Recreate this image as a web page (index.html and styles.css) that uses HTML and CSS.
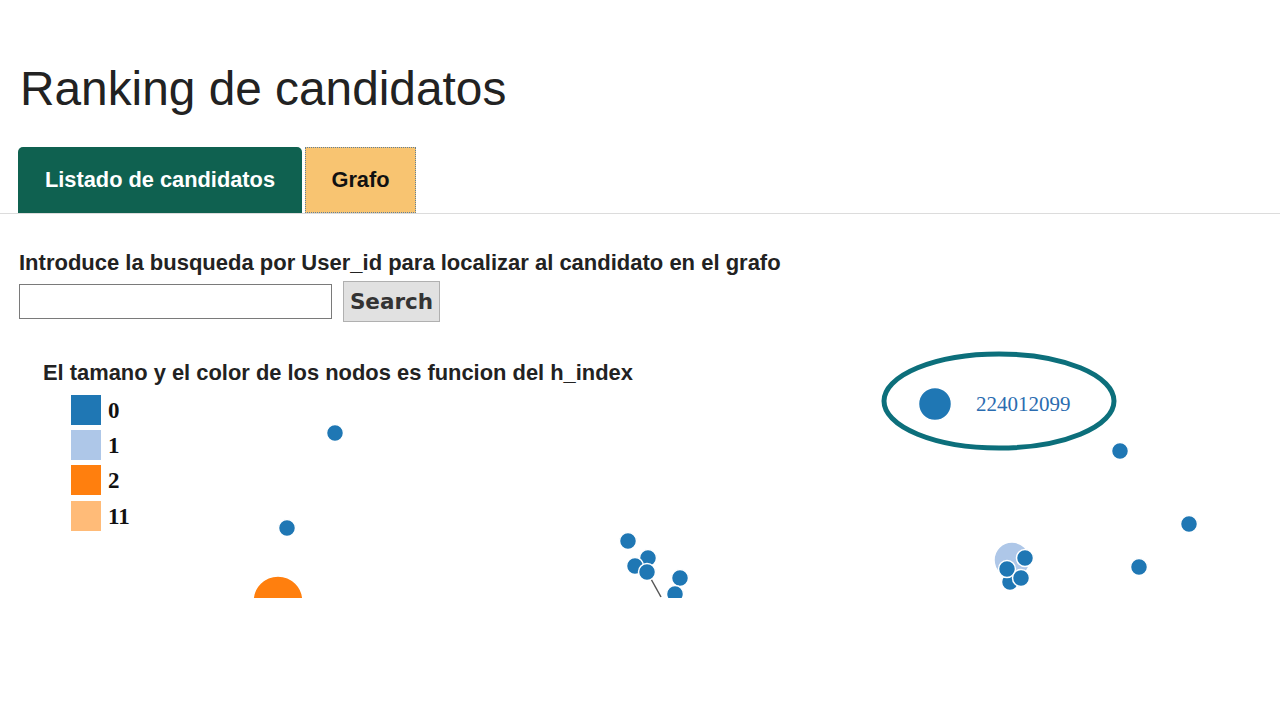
FILE: index.html
```html
<!DOCTYPE html>
<html lang="es">
<head>
<meta charset="utf-8">
<title>Ranking de candidatos</title>
<link rel="stylesheet" href="styles.css">
</head>
<body>
<h1 class="title">Ranking de candidatos</h1>
<nav class="tabs">
  <div class="tab tab-list">Listado de candidatos</div>
  <div class="tab tab-graph">Grafo</div>
</nav>
<section class="search">
  <label class="search-label" for="uid">Introduce la busqueda por User_id para localizar al candidato en el grafo</label>
  <div class="search-row">
    <input id="uid" class="search-input" type="text">
    <button class="search-btn" type="button">Search</button>
  </div>
</section>
<section class="graph">
  <svg class="graph-svg" width="1280" height="253" viewBox="0 345 1280 253">
    <text class="legend-title" x="43" y="380">El tamano y el color de los nodos es funcion del h_index</text>
    <rect x="71" y="395" width="30" height="30" fill="#1f77b4"/>
    <rect x="71" y="430" width="30" height="30" fill="#aec7e8"/>
    <rect x="71" y="465" width="30" height="30" fill="#ff7f0e"/>
    <rect x="71" y="501" width="30" height="30" fill="#ffbb78"/>
    <text class="legend-label" x="108" y="418">0</text>
    <text class="legend-label" x="108" y="453">1</text>
    <text class="legend-label" x="108" y="488">2</text>
    <text class="legend-label" x="108" y="524">11</text>

    <g class="links">
      <line x1="651" y1="579" x2="661" y2="597"/>
    </g>
    <g class="nodes">
      <circle cx="335" cy="433" r="8.5" fill="#1f77b4"/>
      <circle cx="287" cy="528" r="8.5" fill="#1f77b4"/>
      <circle cx="278" cy="601" r="25" fill="#ff7f0e"/>

      <circle cx="628" cy="541" r="8.5" fill="#1f77b4"/>
      <circle cx="648" cy="558" r="8.5" fill="#1f77b4"/>
      <circle cx="635" cy="566" r="8.5" fill="#1f77b4"/>
      <circle cx="647" cy="572" r="8.5" fill="#1f77b4"/>
      <circle cx="680" cy="578" r="8.5" fill="#1f77b4"/>
      <circle cx="675" cy="594" r="8.5" fill="#1f77b4"/>

      <circle cx="1120" cy="451" r="8.5" fill="#1f77b4"/>
      <circle cx="1189" cy="524" r="8.5" fill="#1f77b4"/>
      <circle cx="1139" cy="567" r="8.5" fill="#1f77b4"/>

      <circle cx="1012" cy="560" r="18" fill="#aec7e8"/>
      <circle cx="1010" cy="582" r="8.5" fill="#1f77b4"/>
      <circle cx="1025" cy="558" r="8.5" fill="#1f77b4"/>
      <circle cx="1007" cy="569" r="8.5" fill="#1f77b4"/>
      <circle cx="1021" cy="578" r="8.5" fill="#1f77b4"/>

      <circle cx="935" cy="404" r="16.5" fill="#1f77b4"/>
    </g>
    <text class="node-label" x="976" y="411">224012099</text>
    <ellipse class="highlight" cx="999" cy="401" rx="115" ry="47"/>
  </svg>
</section>
</body>
</html>
```
FILE: styles.css
```css
html, body {
  margin: 0;
  padding: 0;
  background: #ffffff;
}

body {
  font-family: "Liberation Sans", Arial, sans-serif;
  color: #222;
  width: 1280px;
  height: 720px;
  overflow: hidden;
}

.title {
  margin: 61px 0 0 20px;
  font-size: 47.8px;
  line-height: 56px;
  font-weight: normal;
  color: #222;
}

.tabs {
  display: flex;
  gap: 3px;
  margin-top: 30px;
  padding-left: 18px;
  border-bottom: 1px solid #dcdcdc;
  height: 66px;
}

.tab {
  display: flex;
  align-items: center;
  justify-content: center;
  font-weight: bold;
  font-size: 21.8px;
  box-sizing: border-box;
  height: 66px;
}

.tab-list {
  width: 284px;
  background: #0f6150;
  color: #ffffff;
  border-radius: 5px 5px 0 0;
}

.tab-graph {
  width: 111px;
  background: #f8c471;
  color: #111;
  border: 1px dotted #5f7f9a;
}

.search {
  padding-left: 19px;
  margin-top: 36px;
}

.search-label {
  display: block;
  font-weight: bold;
  font-size: 22px;
  line-height: 26px;
  color: #222;
}

.search-row {
  display: flex;
  align-items: center;
  gap: 11px;
  margin-top: 5px;
}

.search-input {
  width: 313px;
  height: 35px;
  box-sizing: border-box;
  border: 1px solid #7a7a7a;
  border-radius: 0;
  margin: 0;
  padding: 0 4px;
}

.search-btn {
  width: 97px;
  height: 41px;
  box-sizing: border-box;
  background: #e1e1e1;
  border: 1px solid #b0b0b0;
  border-radius: 0;
  font-family: "DejaVu Sans", Verdana, sans-serif;
  font-weight: bold;
  font-size: 21.5px;
  color: #333;
  padding: 0;
}

.graph {
  margin-top: 23px;
}

.graph-svg {
  display: block;
}

.legend-title {
  font-family: "Liberation Sans", Arial, sans-serif;
  font-weight: bold;
  font-size: 21.9px;
  fill: #222;
}

.legend-label {
  font-family: "Liberation Serif", "Times New Roman", serif;
  font-weight: bold;
  font-size: 23px;
  fill: #111;
}

.links line {
  stroke: #555;
  stroke-width: 1.5;
}

.nodes circle {
  stroke: #ffffff;
  stroke-width: 1.5;
}

.node-label {
  font-family: "Liberation Serif", "Times New Roman", serif;
  font-size: 21px;
  fill: #2b6cb0;
}

.highlight {
  fill: none;
  stroke: #0c6f7b;
  stroke-width: 5;
}
```
